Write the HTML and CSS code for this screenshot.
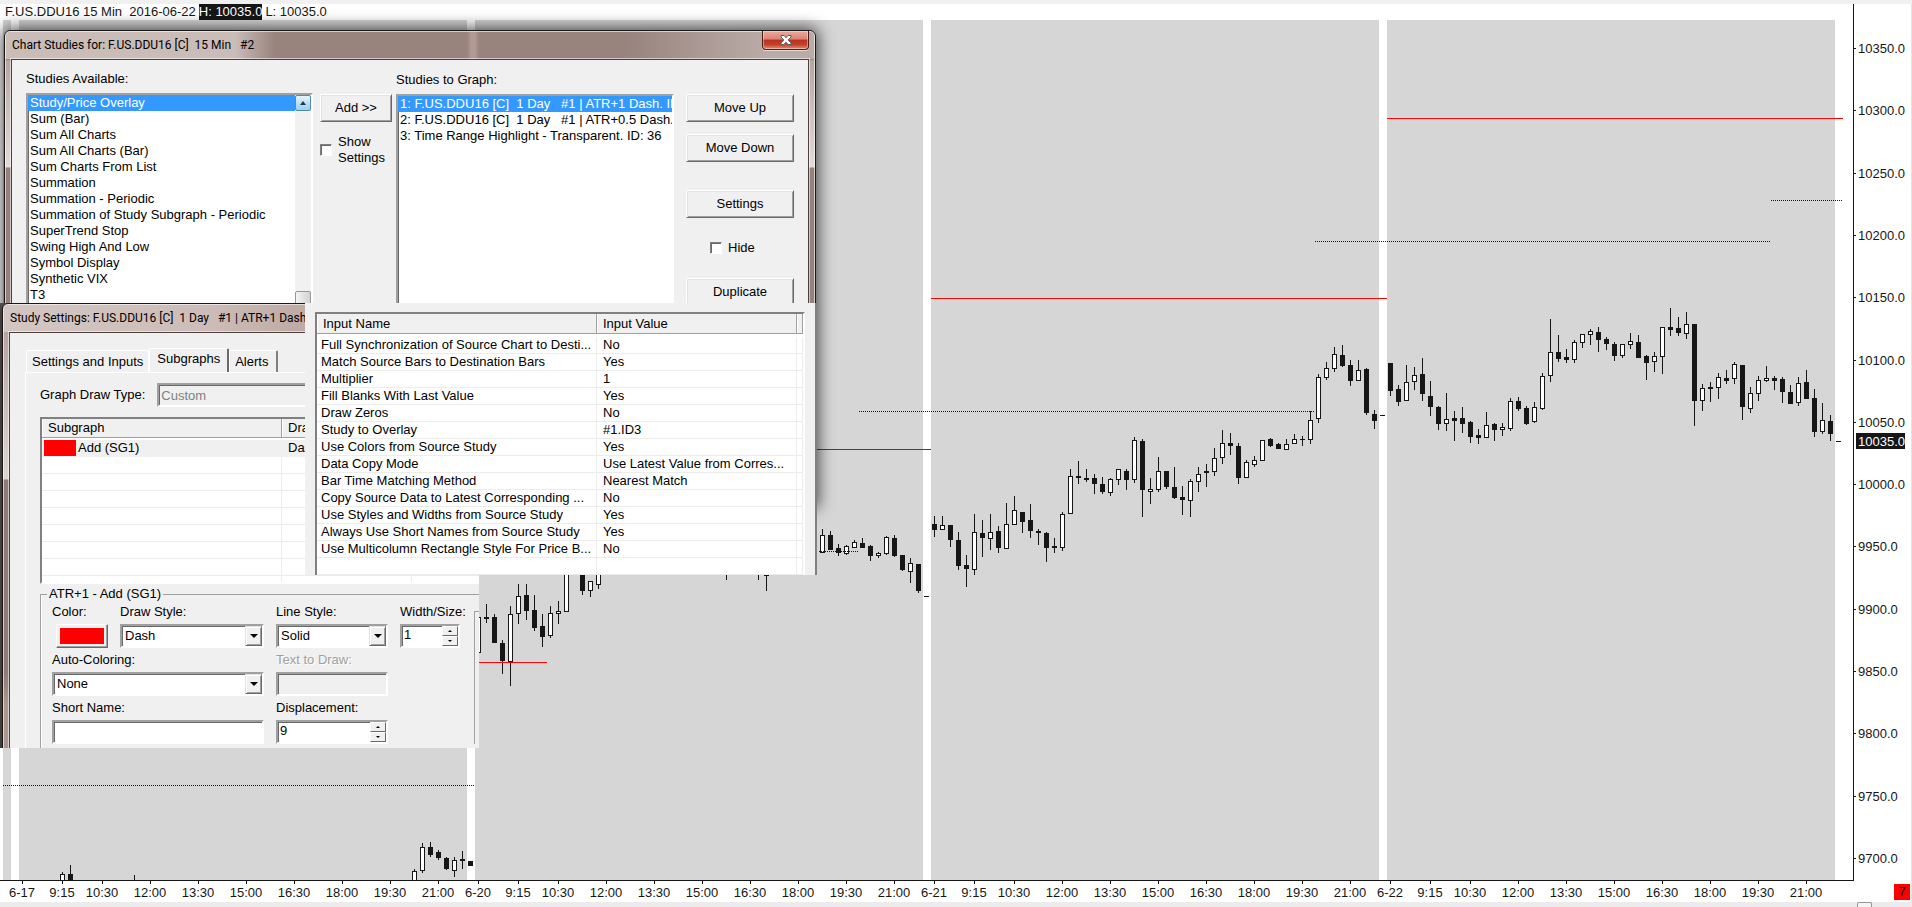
FILE: index.html
```html
<!DOCTYPE html>
<html lang="en">
<head>
<meta charset="UTF-8">
<meta name="viewport" content="width=device-width, initial-scale=1.0">
<title>F.US.DDU16 15 Min</title>
<link rel="stylesheet" href="styles.css">
</head>
<body>
<div class="top-strip"></div>
<main class="chart">
    <svg id="chart" class="chart-canvas"></svg>
    <div class="chart-header"><span>F.US.DDU16 15 Min  2016-06-22</span><span class="high">H: 10035.0</span><span>L: 10035.0</span></div>
    <div class="chart-number">7</div>
</main>
<div class="bottom-strip"><div class="scroll-thumb"></div></div>

<!-- Chart Studies -->
<section class="window studies-window">
    <header class="title-bar">
        <h1 class="window-title">Chart Studies for: F.US.DDU16 [C]  15 Min   #2</h1>
        <button class="close-button" aria-label="Close">
            <svg width="12" height="10" viewBox="0 0 12 10">
                <path d="M1 .5h3l2 2.300 2-2.300h3v1.500L8.200 5 11 8v1.500H8L6 7.200 4 9.500H1V8l2.800-3L1 2z" fill="#fff" stroke="#55606e" stroke-width="1"/>
            </svg>
        </button>
    </header>
    <div class="client studies-client">
        <div class="available">
            <h2 class="caption">Studies Available:</h2>
            <div class="list-box with-scroll">
                <ul class="list">
                    <li class="selected">Study/Price Overlay</li>
                    <li>Sum (Bar)</li>
                    <li>Sum All Charts</li>
                    <li>Sum All Charts (Bar)</li>
                    <li>Sum Charts From List</li>
                    <li>Summation</li>
                    <li>Summation - Periodic</li>
                    <li>Summation of Study Subgraph - Periodic</li>
                    <li>SuperTrend Stop</li>
                    <li>Swing High And Low</li>
                    <li>Symbol Display</li>
                    <li>Synthetic VIX</li>
                    <li>T3</li>
                </ul>
                <div class="scrollbar">
                    <button class="scroll-up" aria-label="Scroll up"></button>
                    <div class="scroll-handle"></div>
                </div>
            </div>
        </div>
        <div class="add-column">
            <button class="button">Add &gt;&gt;</button>
            <label class="check"><input type="checkbox"><span>Show<br>Settings</span></label>
        </div>
        <div class="to-graph">
            <h2 class="caption">Studies to Graph:</h2>
            <div class="list-box">
                <ul class="list">
                    <li class="selected">1: F.US.DDU16 [C]  1 Day   #1 | ATR+1 Dash. ID: 3</li>
                    <li>2: F.US.DDU16 [C]  1 Day   #1 | ATR+0.5 Dash.</li>
                    <li>3: Time Range Highlight - Transparent. ID: 36</li>
                </ul>
            </div>
        </div>
        <div class="actions">
            <button class="button">Move Up</button>
            <button class="button">Move Down</button>
            <button class="button settings">Settings</button>
            <label class="check hide-check"><input type="checkbox"><span>Hide</span></label>
            <button class="button">Duplicate</button>
        </div>
    </div>
</section>

<!-- Study Settings -->
<div class="settings-crop">
    <section class="window settings-window">
        <header class="title-bar">
            <h1 class="window-title">Study Settings: F.US.DDU16 [C]  1 Day   #1 | ATR+1 Dash</h1>
        </header>
        <div class="client settings-client">
            <nav class="tabs">
                <button class="tab">Settings and Inputs</button>
                <button class="tab active">Subgraphs</button>
                <button class="tab last">Alerts</button>
            </nav>
            <div class="tab-page">
                <div class="draw-type">
                    <label for="drawType">Graph Draw Type:</label>
                    <input class="field" id="drawType" type="text" value="Custom" disabled>
                </div>
                <div class="grid-view subgraph-view">
                    <table class="grid">
                        <colgroup><col class="col-subgraph"><col class="col-style"><col></colgroup>
                        <thead>
                            <tr><th>Subgraph</th><th>Draw Style</th><th></th></tr>
                        </thead>
                        <tbody>
                            <tr class="current"><td><span class="swatch"></span>Add (SG1)</td><td>Dash</td><td></td></tr>
                            <tr><td></td><td></td><td></td></tr>
                            <tr><td></td><td></td><td></td></tr>
                            <tr><td></td><td></td><td></td></tr>
                            <tr><td></td><td></td><td></td></tr>
                            <tr><td></td><td></td><td></td></tr>
                            <tr><td></td><td></td><td></td></tr>
                            <tr><td></td><td></td><td></td></tr>
                            <tr><td></td><td></td><td></td></tr>
                        </tbody>
                    </table>
                </div>
                <fieldset class="group">
                    <legend>ATR+1 - Add (SG1)</legend>
                    <div class="group-body">
                        <div class="form">
                            <div class="form-row">
                                <div class="item color-item">
                                    <label for="color">Color:</label>
                                    <button class="color-button" id="color"><span></span></button>
                                </div>
                                <div class="item style-item">
                                    <label for="drawStyle">Draw Style:</label>
                                    <div class="combo">
                                        <select id="drawStyle"><option>Dash</option></select>
                                        <span class="combo-arrow"></span>
                                    </div>
                                </div>
                                <div class="item line-item">
                                    <label for="lineStyle">Line Style:</label>
                                    <div class="combo">
                                        <select id="lineStyle"><option>Solid</option></select>
                                        <span class="combo-arrow"></span>
                                    </div>
                                </div>
                                <div class="item size-item">
                                    <label for="size">Width/Size:</label>
                                    <div class="spin">
                                        <input id="size" type="number" value="1">
                                        <div class="spin-buttons"><button aria-label="Increase"></button><button class="down" aria-label="Decrease"></button></div>
                                    </div>
                                </div>
                            </div>
                            <div class="form-row">
                                <div class="item wide-item">
                                    <label for="autoColoring">Auto-Coloring:</label>
                                    <div class="combo">
                                        <select id="autoColoring"><option>None</option></select>
                                        <span class="combo-arrow"></span>
                                    </div>
                                </div>
                                <div class="item line-item">
                                    <label class="disabled" for="textToDraw">Text to Draw:</label>
                                    <input class="field" id="textToDraw" type="text" disabled>
                                </div>
                            </div>
                            <div class="form-row">
                                <div class="item wide-item">
                                    <label for="shortName">Short Name:</label>
                                    <input class="field" id="shortName" type="text">
                                </div>
                                <div class="item line-item">
                                    <label for="displacement">Displacement:</label>
                                    <div class="spin">
                                        <input id="displacement" type="number" value="9">
                                        <div class="spin-buttons"><button aria-label="Increase"></button><button class="down" aria-label="Decrease"></button></div>
                                    </div>
                                </div>
                            </div>
                        </div>
                        <div class="side-group"></div>
                    </div>
                </fieldset>
            </div>
        </div>
    </section>
</div>

<!-- Study inputs -->
<section class="inputs-panel">
    <div class="grid-view inputs-view">
        <table class="grid">
            <colgroup><col class="col-name"><col class="col-value"><col></colgroup>
            <thead>
                <tr><th>Input Name</th><th>Input Value</th><th></th></tr>
            </thead>
            <tbody>
                <tr><td>Full Synchronization of Source Chart to Desti...</td><td>No</td><td></td></tr>
                <tr><td>Match Source Bars to Destination Bars</td><td>Yes</td><td></td></tr>
                <tr><td>Multiplier</td><td>1</td><td></td></tr>
                <tr><td>Fill Blanks With Last Value</td><td>Yes</td><td></td></tr>
                <tr><td>Draw Zeros</td><td>No</td><td></td></tr>
                <tr><td>Study to Overlay</td><td>#1.ID3</td><td></td></tr>
                <tr><td>Use Colors from Source Study</td><td>Yes</td><td></td></tr>
                <tr><td>Data Copy Mode</td><td>Use Latest Value from Corres...</td><td></td></tr>
                <tr><td>Bar Time Matching Method</td><td>Nearest Match</td><td></td></tr>
                <tr><td>Copy Source Data to Latest Corresponding ...</td><td>No</td><td></td></tr>
                <tr><td>Use Styles and Widths from Source Study</td><td>Yes</td><td></td></tr>
                <tr><td>Always Use Short Names from Source Study</td><td>Yes</td><td></td></tr>
                <tr><td>Use Multicolumn Rectangle Style For Price B...</td><td>No</td><td></td></tr>
                <tr><td></td><td></td><td></td></tr>
            </tbody>
        </table>
    </div>
</section>

<script src="chart.js"></script>
</body>
</html>
```

FILE: styles.css
```css
* {
    box-sizing: border-box;
}
body {
    display: flex;
    flex-direction: column;
    height: 100vh;
    margin: 0;
    overflow: hidden;
    background: #fff;
    color: #000;
    font: 13px/16px "Liberation Sans", Arial, sans-serif;
}
h1, h2, ul {
    margin: 0;
    padding: 0;
    font-size: inherit;
    font-weight: normal;
}
button, input, select {
    font: inherit;
    color: inherit;
    margin: 0;
    padding: 0;
    border-radius: 0;
}

/* Chart */
.top-strip {
    height: 4px;
    background: #f0f0f0;
}
.chart {
    position: relative;
    flex: 1;
    min-height: 0;
    border-right: 1px solid #e4e4e4;
}
.chart-canvas {
    display: block;
    width: 100%;
    height: 100%;
}
.chart-canvas text {
    font: 13px "Liberation Sans", Arial, sans-serif;
    fill: #161616;
}
.chart-header {
    position: absolute;
    top: 0;
    left: 5px;
    display: flex;
    gap: 3px;
    color: #161616;
    white-space: pre;
}
.high {
    background: #161616;
    color: #fff;
}
.chart-number {
    position: absolute;
    right: 1px;
    bottom: 2px;
    width: 16px;
    height: 16px;
    background: #f00;
    text-align: center;
}
.bottom-strip {
    display: flex;
    justify-content: flex-end;
    height: 5px;
    padding-right: 40px;
    background: #ececec;
}
.scroll-thumb {
    width: 15px;
    border: 1px solid #979797;
    border-bottom: 0;
    border-radius: 2px 2px 0 0;
    background: #f4f4f4;
}

/* Windows */
.window {
    position: absolute;
    display: flex;
    flex-direction: column;
    padding: 0 6px;
    border: 1px solid #1c1816;
    border-radius: 6px 6px 0 0;
    box-shadow: inset 0 0 0 1px rgba(255, 255, 255, 0.6), 0 0 16px 2px rgba(0, 0, 0, 0.7);
}
.title-bar {
    display: flex;
    justify-content: space-between;
    height: 28px;
}
.window-title {
    margin-left: -5px;
    padding: 0 6px;
    font: 12px/28px Roboto, "Open Sans", sans-serif;
    white-space: pre;
}
.close-button {
    display: flex;
    align-items: center;
    justify-content: center;
    width: 47px;
    height: 19px;
    border: 1px solid #4d1a14;
    border-top: 0;
    border-radius: 0 0 4px 4px;
    background: linear-gradient(#e9a99d, #dc8474 45%, #b8331c 50%, #c4402a 75%, #e38a6c);
    box-shadow: inset 0 0 0 1px rgba(255, 255, 255, 0.4), 0 1px 0 rgba(255, 255, 255, 0.6);
}
.client {
    flex: 1;
    border: 1px solid #4d3f3b;
    background: #f0f0f0;
    box-shadow: 0 0 0 1px rgba(255, 255, 255, 0.55);
}
.studies-window {
    top: 30px;
    left: 4px;
    width: 812px;
    height: 476px;
    background:
        linear-gradient(90deg, rgba(219, 207, 203, 0.75), rgba(219, 207, 203, 0.75) 230px, transparent 270px, transparent 620px, rgba(208, 198, 196, 0.6) 760px) 0 0 / 100% 28px no-repeat,
        linear-gradient(90deg, transparent 462px, #b39a94 466px, #b39a94 470px, transparent 474px) 0 0 / 100% 28px no-repeat,
        linear-gradient(#98837d, #98837d 28px, #b5a7a2 30px, #e2dbd9 136px, #95827c 137px);
}
.studies-client {
    display: flex;
    padding: 11px 14px 0;
}
.caption {
    height: 22px;
}
.list-box {
    display: flex;
    height: 300px;
    border: 2px solid;
    border-color: #a0a0a0 #fff #fff #a0a0a0;
    box-shadow: inset 1px 1px 0 #696969;
    background: #fff;
    overflow: hidden;
}
.list {
    flex: 1;
    min-width: 0;
    list-style: none;
    overflow: hidden;
}
.list li {
    padding: 0 2px;
    white-space: pre;
}
.list .selected {
    background: #39f;
    color: #fff;
}
.available {
    width: 287px;
}
.scrollbar {
    display: flex;
    flex-direction: column;
    justify-content: space-between;
    width: 16px;
    height: 230px;
    background: #f1f1f1;
}
.scroll-up {
    display: flex;
    align-items: center;
    justify-content: center;
    height: 16px;
    border: 1px solid #4b8db8;
    border-radius: 2px;
    background: linear-gradient(#e6f5fd, #b8ddf0 60%, #9fd0ea);
}
.scroll-up::before {
    content: "";
    border: 3px solid transparent;
    border-top: 0;
    border-bottom: 4px solid #1c3c55;
}
.scroll-handle {
    height: 34px;
    border: 1px solid #979797;
    border-radius: 2px;
    background: linear-gradient(90deg, #f4f4f4, #d2d2d4);
}
.button {
    height: 28px;
    border: 1px solid;
    border-color: #fff #696969 #696969 #fff;
    background: #f0f0f0;
    box-shadow: inset 1px 1px 0 #e3e3e3, inset -1px -1px 0 #a0a0a0;
}
.check {
    display: flex;
    align-items: center;
    gap: 6px;
}
.check input {
    appearance: none;
    width: 12px;
    height: 12px;
    border: 1px solid;
    border-color: #808080 #fff #fff #808080;
    background: #fff;
    box-shadow: inset 1px 1px 0 #696969;
}
.add-column {
    display: flex;
    flex-direction: column;
    gap: 12px;
    width: 72px;
    margin: 23px 4px 0 7px;
}
.to-graph {
    width: 278px;
    padding-top: 1px;
}
.actions {
    display: flex;
    flex-direction: column;
    gap: 12px;
    width: 108px;
    margin: 23px 0 0 12px;
}
.settings {
    margin-top: 16px;
}
.hide-check {
    height: 36px;
    padding-left: 24px;
}

/* Study Settings window */
.settings-crop {
    position: absolute;
    top: 303px;
    left: 0;
    width: 479px;
    height: 445px;
    overflow: hidden;
    background: #6a6462;
}
.settings-window {
    top: 0;
    left: 2px;
    width: 520px;
    height: 520px;
    background:
        linear-gradient(90deg, #d3c6c2, #cdbdb8 200px, #c0aca6 290px, #a58f88) 0 0 / 100% 28px no-repeat,
        linear-gradient(#cdbdb8, #b5a49f 28px, #ddd5d2 175px, #8f7c76 176px, #8f7c76 370px, #ab9690 400px);
}
.settings-client {
    padding: 15px 14px 0 15px;
}
.tabs {
    display: flex;
    align-items: flex-end;
    height: 24px;
    padding-left: 1px;
}
.tab {
    height: 22px;
    padding: 0 5px;
    border: 1px solid #fff;
    border-bottom: 0;
    border-radius: 2px 2px 0 0;
    background: #f0f0f0;
}
.tab.active {
    height: 24px;
    padding: 0 7px 3px;
    border-right: 2px solid #696969;
}
.tab.last {
    padding-right: 8px;
    border-right: 2px solid #808080;
}
.tab-page {
    width: 480px;
    border: 1px solid #fff;
    padding: 10px 14px;
}
.draw-type {
    display: flex;
    align-items: center;
    gap: 12px;
}
.draw-type .field {
    flex: 1;
}
.field, .combo, .spin {
    width: 100%;
    height: 24px;
    border: 2px solid;
    border-color: #a0a0a0 #fff #fff #a0a0a0;
    background: #fff;
    box-shadow: inset 1px 1px 0 #696969;
}
.field {
    padding: 0 2px;
}
.field:disabled {
    background: #f0f0f0;
    color: #808080;
}

/* Tables */
.grid-view {
    border: 2px solid;
    border-color: #808080 #fff #fff #808080;
    background: #fff;
    overflow: hidden;
}
.grid {
    width: 100%;
    border-collapse: separate;
    border-spacing: 0;
    table-layout: fixed;
}
.grid th {
    height: 19px;
    padding: 0 6px;
    border-right: 1px solid #a0a0a0;
    border-bottom: 1px solid #a0a0a0;
    background: #f0f0f0;
    font-weight: normal;
    text-align: left;
    white-space: nowrap;
    box-shadow: inset 1px 0 0 #fff;
}
.grid td {
    height: 17px;
    padding: 0 6px;
    border-right: 1px solid #ececec;
    border-bottom: 1px solid #ececec;
    line-height: 16px;
    white-space: nowrap;
}
.grid td:first-child {
    padding: 0 0 0 4px;
}
.grid tbody::before {
    content: "";
    display: block;
    height: 3px;
}
.grid .current td {
    border-color: #f0f0f0;
    background: #f0f0f0;
}
.subgraph-view {
    height: 167px;
    margin-top: 10px;
}
.subgraph-view tbody::before {
    height: 2px;
}
.col-subgraph {
    width: 240px;
}
.col-style {
    width: 130px;
}
.grid .current td:first-child {
    padding-left: 2px;
}
.swatch {
    display: inline-block;
    width: 32px;
    height: 16px;
    margin-right: 2px;
    background: #f00;
    vertical-align: top;
}

/* Subgraph form */
.group {
    min-width: 0;
    margin: 2px 0 0;
    padding: 2px 0 12px 11px;
    border: 1px solid #a0a0a0;
    box-shadow: inset 1px 0 0 #fff;
}
.group legend {
    margin-left: -5px;
    padding: 0 2px;
}
.group-body {
    display: flex;
    gap: 14px;
}
.form {
    display: flex;
    flex-direction: column;
    gap: 4px;
}
.form-row {
    display: flex;
    gap: 12px;
}
.item {
    display: flex;
    flex-direction: column;
    gap: 4px;
    white-space: nowrap;
}
.color-item {
    width: 56px;
}
.style-item {
    width: 144px;
}
.line-item {
    width: 112px;
}
.size-item {
    width: 60px;
}
.wide-item {
    width: 212px;
}
.color-button {
    align-self: flex-end;
    width: 52px;
    height: 24px;
    padding: 3px;
    border: 1px solid;
    border-color: #fff #696969 #696969 #fff;
    background: #f0f0f0;
    box-shadow: inset -1px -1px 0 #a0a0a0;
}
.color-button span {
    display: block;
    width: 44px;
    height: 16px;
    background: #f00;
}
.disabled {
    color: #a0a0a0;
    text-shadow: 1px 1px 0 #fff;
}
.combo, .spin {
    display: flex;
}
.combo select {
    flex: 1;
    appearance: none;
    padding-left: 3px;
    border: 0;
    background: transparent;
}
.combo-arrow {
    display: flex;
    align-items: center;
    justify-content: center;
    width: 17px;
    border: 1px solid;
    border-color: #e3e3e3 #696969 #696969 #e3e3e3;
    background: #f0f0f0;
    box-shadow: inset 1px 1px 0 #fff, inset -1px -1px 0 #a0a0a0;
}
.combo-arrow::before {
    content: "";
    border: 4px solid transparent;
    border-top-color: #000;
    border-bottom: 0;
}
.spin input {
    flex: 1;
    min-width: 0;
    padding: 0 0 3px 2px;
    border: 0;
    background: transparent;
    appearance: textfield;
}
.spin-buttons {
    display: flex;
    flex-direction: column;
    width: 16px;
}
.spin-buttons button {
    display: flex;
    flex: 1;
    align-items: center;
    justify-content: center;
    border: 1px solid;
    border-color: #fff #696969 #696969 #fff;
    background: #f0f0f0;
}
.spin-buttons button::before {
    content: "";
    border: 2px solid transparent;
    border-top: 0;
    border-bottom-color: #000;
}
.spin-buttons .down::before {
    border: 2px solid transparent;
    border-top-color: #000;
    border-bottom: 0;
}
.side-group {
    width: 40px;
    margin-top: 7px;
    border: 1px solid #a0a0a0;
    border-bottom: 0;
}

/* Inputs panel */
.inputs-panel {
    position: absolute;
    top: 303px;
    left: 305px;
    width: 512px;
    height: 272px;
    padding: 9px 10px 0;
    overflow: hidden;
    border-right: 2px solid #808080;
    background: #f0f0f0;
}
.inputs-view {
    height: 280px;
}
.inputs-view th {
    height: 20px;
}
.col-name {
    width: 280px;
}
.col-value {
    width: 200px;
}
```

FILE: chart.js
```js
const svg = document.getElementById("chart");
const TOP = 4;
const INK = "#161616";
const width = svg.clientWidth;
const height = svg.clientHeight;
svg.setAttribute("viewBox", `0 ${TOP} ${width} ${height}`);

const axisX = width - 58;
const axisY = TOP + height - 22;
const dayEnd = axisX - 18;
const BAR = 8;

// [high, top of body, bottom of body, low, 1 = rising bar]
const days = [
    { x: 22, bars: {
        5: [872,874,882,882,1], 6: [865,874,880,880,0], 14: [875,880,880,880,0],
        49: [869,871,882,882,1], 50: [843,847,871,873,1], 51: [842,847,855,857,0],
        52: [850,852,858,860,0], 53: [857,858,869,870,0], 54: [857,860,871,877,1],
        55: [851,859,861,869,0], 56: [861,861,866,866,0]
    } },
    { x: 478, bars: {
        0: [617,617,653,653,1], 1: [604,617,619,623,0], 2: [614,617,643,643,0], 3: [640,643,661,674,0],
        4: [606,614,662,686,1], 5: [584,596,614,624,1], 6: [584,595,611,620,0], 7: [595,610,628,631,0],
        8: [614,626,637,647,0], 9: [606,613,636,638,1], 10: [601,611,614,624,1], 11: [560,560,612,612,1],
        13: [560,560,591,595,0], 14: [581,581,591,597,1], 15: [560,560,585,589,1],
        31: [560,570,572,580,0], 35: [560,570,572,580,0], 36: [570,574,576,591,0],
        43: [529,535,553,553,1], 44: [531,535,550,550,0], 45: [544,548,553,556,0], 46: [545,546,554,555,1],
        47: [540,542,548,548,1], 48: [538,543,548,548,0], 49: [545,546,556,561,0], 50: [552,553,556,558,1],
        51: [536,537,554,555,1], 52: [535,538,556,557,0], 53: [555,555,570,571,0], 54: [558,563,572,583,1],
        55: [564,564,591,593,0], 56: [596,596,597,597,0]
    } },
    { x: 934, bars: [
        [516,524,530,537,0],[516,525,530,530,1],[525,525,540,547,0],[532,540,566,570,0],[555,565,569,587,0],
        [514,532,570,575,1],[520,533,538,557,0],[514,532,539,550,1],[526,531,548,553,0],[503,524,549,549,1],
        [496,510,525,525,1],[512,512,522,533,0],[504,520,531,538,0],[529,531,533,545,0],[532,533,548,562,0],
        [538,546,548,553,0],[512,514,548,551,1],[469,476,514,514,1],[461,476,478,484,0],[469,478,480,482,0],
        [474,478,484,494,0],[477,484,492,494,0],[478,479,493,496,1],[469,469,480,485,1],[469,471,480,490,0],
        [437,440,480,483,1],[439,441,490,517,0],[478,489,492,504,1],[457,471,490,492,1],[471,471,487,489,0],
        [467,487,498,499,0],[486,497,500,515,0],[479,481,501,517,1],[467,474,482,492,1],[464,471,473,487,0],
        [448,458,472,476,1],[430,443,458,464,1],[433,443,446,455,0],[443,446,478,484,0],[460,462,478,478,1],
        [456,460,465,467,1],[440,440,461,461,1],[438,439,446,447,0],[443,444,449,449,0],[439,444,450,450,1],
        [434,439,444,444,1],[436,439,440,446,0],[411,420,440,444,1],[374,377,419,423,1],[362,368,378,380,1],
        [347,354,369,372,1],[345,355,366,367,0],[360,365,381,386,0],[360,370,381,381,1],[368,369,413,415,0],
        [410,414,421,429,0],[415,415,416,416,0]
    ] },
    { x: 1390, bars: [
        [363,363,391,396,0],[385,389,402,406,0],[365,382,401,401,1],[367,375,382,390,1],[358,374,394,401,0],
        [381,396,407,416,0],[406,407,424,430,0],[393,419,424,431,1],[411,418,421,441,0],[407,418,424,433,0],
        [421,422,437,443,0],[429,435,438,444,0],[412,425,438,438,1],[423,424,430,441,0],[423,427,430,436,1],
        [398,401,429,431,1],[397,401,409,411,0],[406,408,424,425,0],[402,407,422,423,1],[373,376,409,410,1],
        [319,352,376,382,1],[335,352,359,362,0],[349,357,360,363,0],[340,342,360,363,1],[334,334,343,348,1],
        [329,331,335,345,1],[327,332,340,352,0],[337,339,344,350,0],[342,344,356,361,0],[344,344,356,358,1],
        [333,341,345,349,1],[335,342,358,358,0],[355,356,363,380,0],[352,356,362,372,1],[327,327,357,374,1],
        [308,327,330,336,0],[317,328,333,336,0],[312,324,334,339,1],[324,324,401,426,0],[384,388,401,411,1],
        [382,387,389,402,0],[373,377,388,399,1],[370,378,381,384,0],[362,364,379,384,1],[365,365,407,420,0],
        [387,393,409,413,1],[376,380,394,401,1],[366,378,381,382,1],[376,378,381,390,0],[377,379,392,403,0],
        [385,392,404,404,0],[377,383,403,406,1],[370,382,399,399,0],[389,398,432,437,0],[403,420,432,434,1],
        [415,421,434,441,0],[441,441,442,442,0]
    ] }
];

let out = "";

function box(x, y, w, h, fill) {
    out += `<rect x="${x}" y="${y}" width="${w}" height="${h}" fill="${fill}"/>`;
}

function line(x1, x2, y, color, dash) {
    out += `<line x1="${x1}" x2="${x2}" y1="${y + 0.5}" y2="${y + 0.5}" stroke="${color}" stroke-dasharray="${dash || "none"}"/>`;
}

function label(x, y, text, anchor, fill) {
    out += `<text x="${x}" y="${y}" text-anchor="${anchor}" style="fill:${fill || INK}">${text}</text>`;
}

// trading hours background with the breaks between the days
box(3, 20, dayEnd - 3, axisY - 20, "#d6d6d6");
days.forEach(day => box(day.x - 11, 20, 8, axisY - 20, "#fff"));

days.forEach(day => {
    Object.entries(day.bars).forEach(([i, [high, top, bottom, low, up]]) => {
        const x = day.x + i * BAR;
        box(x, high, 1, low - high, INK);
        if (up) {
            out += `<rect x="${x - 1.5}" y="${top + 0.5}" width="4" height="${bottom - top - 1}" fill="#fff" stroke="${INK}"/>`;
        } else {
            box(x - 2, top, 5, bottom - top, INK);
        }
    });
});

// overlay studies
line(1387, 1843, 118, "#f00");
line(931, 1387, 298, "#f00");
line(817, 931, 449, "#e60000");
line(479, 547, 662, "#f00");
line(1771, 1843, 200, "#0000d0", "1 1");
line(1315, 1771, 241, "#0000d0", "1 1");
line(859, 1315, 411, "#0000d0", "1 1");
line(819, 859, 551, "#0000d0", "1 1");
line(3, 475, 785, "#0000d0", "1 1");

// axes
box(0, axisY + 1, width, height, "#fff");
box(0, axisY, axisX + 1, 1, INK);
box(axisX, TOP, 1, axisY - TOP, INK);

for (let i = 0; i < 14; i++) {
    const y = Math.round(48 + i * 62.31);
    box(axisX + 1, y, 2, 1, INK);
    label(axisX + 5, y + 5, (10350 - i * 50).toFixed(1), "start");
}
box(axisX + 3, 433, 49, 16, INK);
label(axisX + 5, 446, "10035.0", "start", "#fff");

const times = ["9:15", "10:30", "12:00", "13:30", "15:00", "16:30", "18:00", "19:30", "21:00"];
const dates = ["6-17", "6-20", "6-21", "6-22"];
days.forEach((day, d) => {
    box(day.x, axisY + 1, 1, 3, INK);
    label(day.x, axisY + 17, dates[d], "middle");
    times.forEach((time, i) => {
        const x = day.x + (i === 0 ? 40 : 32 + i * 48);
        box(x, axisY + 1, 1, 3, INK);
        label(x, axisY + 17, time, "middle");
    });
});

svg.innerHTML = out;
```
